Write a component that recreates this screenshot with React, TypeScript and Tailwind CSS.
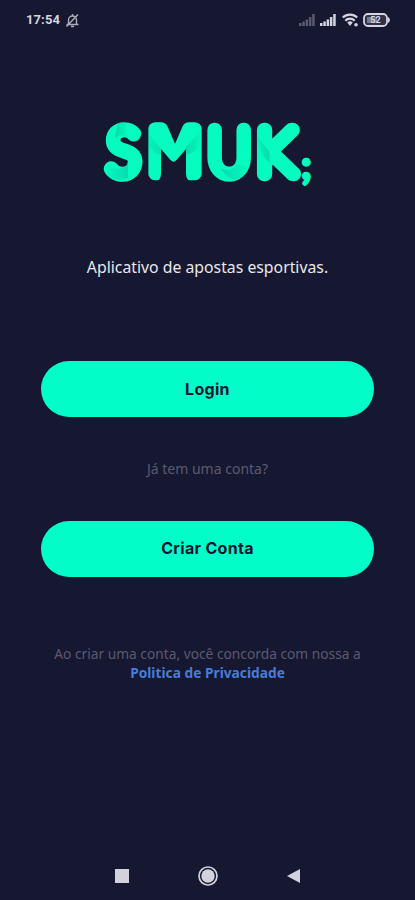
import type { ReactNode } from "react";

function StatusBar() {
    return (
        <header className="flex h-10 items-center justify-between pl-[26px] pr-6 text-[#d5d5df]">
            <div className="flex items-center gap-[5px]">
                <span className="font-['Roboto'] text-[13px] font-bold tracking-[0.1px]">17:54</span>
                <svg className="size-[15px]" viewBox="0 0 15 15" fill="none" stroke="currentColor" strokeWidth="1.4">
                    <path d="M1.500 11.500h12M3.500 11.500V7a4 4 0 0 1 8 0v4.500M6 13.500h3M7.500 1v2M1.500 13.500 13 1.500" opacity=".8" />
                </svg>
            </div>
            <div className="flex items-center">
                <svg className="h-3 w-[17px]" viewBox="0 0 17 12" fill="currentColor" opacity=".35">
                    <path d="M0 9h2.500v3H0zM3.300 7.500h2.500V12H3.300zM6.600 5.500h2.500V12H6.600zM9.900 3h2.500v9H9.900zM13.200 0h2.500v12h-2.500z" />
                </svg>
                <svg className="ml-[4px] h-3 w-[17px]" viewBox="0 0 17 12" fill="currentColor">
                    <path d="M0 9h2.500v3H0zM3.300 7.500h2.500V12H3.300zM6.600 5.500h2.500V12H6.600zM9.900 3h2.500v9H9.900zM13.200 0h2.500v12h-2.500z" />
                </svg>
                <svg className="ml-[5px] h-[14px] w-[17px]" viewBox="0 0 17 14" fill="none" stroke="currentColor" strokeWidth="2.2">
                    <path d="M.8 4.500a10.500 10.500 0 0 1 14.400 0M3.300 7.700a6.500 6.500 0 0 1 9.400 0" />
                    <path d="M5.300 9.500a3.600 3.600 0 0 1 5.400 0L8 13z" fill="currentColor" stroke="none" />
                    <circle cx="14" cy="11.800" r="1.800" fill="currentColor" stroke="none" />
                </svg>
                <svg className="ml-1 h-[14px] w-[28px]" viewBox="0 0 28 14">
                    <rect x="1" y="1" width="23" height="12" rx="4" fill="#31314a" stroke="currentColor" strokeWidth="1.800" />
                    <path d="M4 4h10v6H4z" fill="currentColor" opacity=".45" />
                    <path d="M25 4q2 1 2 3t-2 3z" fill="currentColor" />
                    <text x="12.500" y="10.300" textAnchor="middle" fill="currentColor" className="font-['Roboto'] text-[9px] font-bold">
                        52
                    </text>
                </svg>
            </div>
        </header>
    );
}

function Logo() {
    return (
        <svg
            className="mx-auto h-24 w-[220px] overflow-visible"
            viewBox="100 104 220 96"
            fill="#06fbc0"
            stroke="#06fbc0"
            strokeLinejoin="round"
            strokeLinecap="round"
            role="img"
            aria-label="SMUK;"
        >
            <defs>
                <linearGradient id="fold" x1="0" y1="0" x2="1" y2="0">
                    <stop offset="0" stopColor="#087e80" stopOpacity=".05" />
                    <stop offset="1" stopColor="#087e80" stopOpacity=".26" />
                </linearGradient>
                <linearGradient id="foldBack" x1="1" y1="0" x2="0" y2="0">
                    <stop offset="0" stopColor="#087e80" stopOpacity=".03" />
                    <stop offset="1" stopColor="#087e80" stopOpacity=".26" />
                </linearGradient>
            </defs>
            <g fontFamily="Lato" fontWeight="100" fontSize="62" strokeWidth="14.500" textAnchor="middle">
                <text transform="translate(125.300 174) scale(.97 1)">S</text>
                <text transform="translate(177 174) scale(1.15 1)" fontFamily="DejaVu Sans" strokeWidth="12.700">
                    M
                </text>
                <text transform="translate(231.200 174) scale(.95 1)">U</text>
                <text x="278" y="174">K</text>
                <text x="308.300" y="178.500" fontWeight="900" fontSize="39" strokeWidth="2.500">;</text>
            </g>
            <g stroke="none">
                <path fill="#161730" d="M156 182q7-1 7-8v-25l9.500 11q3 3.500 6 0l9.500-11v25q0 7 7 8z" />
                <path fill="url(#foldBack)" d="M120 122.500q4-1 8 0-3 5 2 14.500l-5-1.500q-6-1-6 3l-2-2z" />
                <path fill="url(#fold)" d="M110 165q7 6 13 3 5-2 7-6v16q-10 4-19-1z" />
                <path fill="url(#fold)" d="M149 132 171 158l-8-9v6q-8-2-14-10z" />
                <path fill="url(#foldBack)" d="M202 132 188 147v8q8-2 14-10z" />
                <path fill="url(#foldBack)" d="M222 168q12 6 17-5l10 4q-3 11-13 13-8-3-14-12z" />
                <path fill="url(#fold)" d="M258 134 271.500 152v11q-10-8-13.500-29z" />
            </g>
        </svg>
    );
}

function PillButton({ children }: { children: ReactNode }) {
    return (
        <button className="h-14 w-full rounded-full bg-[#02fec8] pb-px font-['Inter'] text-[16px] font-bold tracking-[0.3px] text-[#101631]">
            {children}
        </button>
    );
}

function NavBar() {
    return (
        <nav className="mt-auto flex h-[49px] items-center justify-between px-[115px] text-[#d2d2dc]">
            <span className="size-[14px] bg-current" />
            <svg className="size-5" viewBox="0 0 20 20" fill="currentColor">
                <circle cx="10" cy="10" r="9" fill="none" stroke="currentColor" strokeWidth="1.700" />
                <circle cx="10" cy="10" r="6.700" />
            </svg>
            <svg className="h-[14px] w-[13px]" viewBox="0 0 13 14" fill="currentColor">
                <path d="M13 0v14L0 7z" />
            </svg>
        </nav>
    );
}

export default function App() {
    return (
        <div className="flex h-[900px] w-full flex-col bg-[#161730] font-['Noto_Sans',sans-serif]">
            <StatusBar />
            <main className="px-[41px] pt-16 text-center">
                <Logo />
                <p className="mt-[55px] text-[15.8px] leading-6 text-[#e8e8ed]">Aplicativo de apostas esportivas.</p>
                <div className="mt-[82px]">
                    <PillButton>Login</PillButton>
                </div>
                <p className="mt-[42px] mb-[41.5px] text-[14px] leading-5 text-[#5c5a72]">Já tem uma conta?</p>
                <PillButton>Criar Conta</PillButton>
                <p className="mt-[67.5px] text-[13.75px] leading-[19px] text-[#5c5a72]">
                    Ao criar uma conta, você concorda com nossa a
                    <span className="block font-bold text-[#477cdb]">Politica de Privacidade</span>
                </p>
            </main>
            <NavBar />
        </div>
    );
}
